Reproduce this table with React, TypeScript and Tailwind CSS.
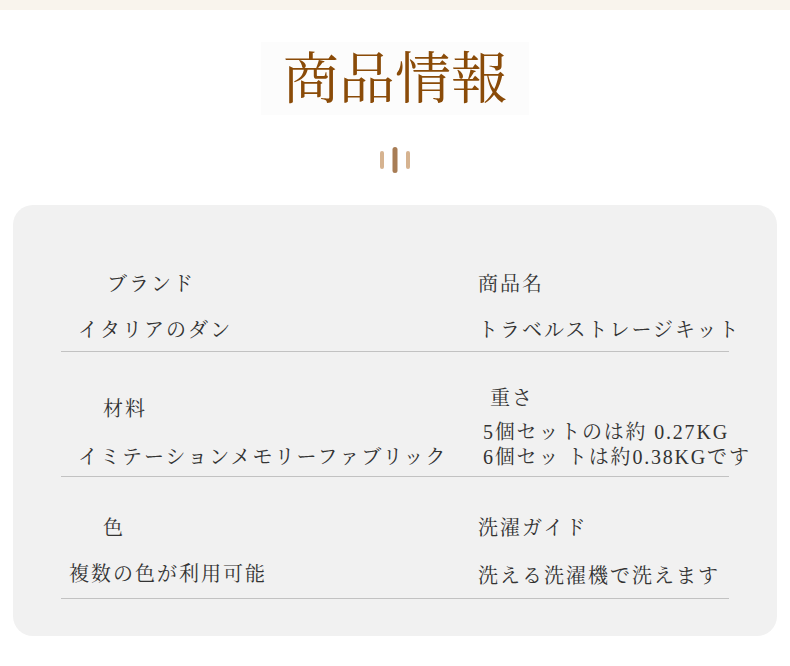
export default function App() {
  const font = "font-['Liberation_Serif','Noto_Serif_CJK_JP','Noto_Sans_CJK_JP',serif]";
  return (
    <div className={`w-full min-h-[666px] bg-white ${font}`}>
      <div className="h-[10px] bg-[#f9f4ed]"></div>

      {/* Title */}
      <div className="flex justify-center pt-[32px]">
        <div className="w-[268px] h-[73px] bg-[#fcfcfc] flex items-center justify-center">
          <h1 className="text-[56px] leading-none text-[#8a4b08]">商品情報</h1>
        </div>
      </div>

      <div className="flex justify-center mt-[32px]">
        <svg width="30" height="26" viewBox="0 0 30 26">
          <rect x="0" y="4" width="4" height="18" rx="2" fill="#d6b390" />
          <rect x="12.5" y="0" width="5" height="26" rx="2.5" fill="#a87d55" />
          <rect x="26" y="4" width="4" height="18" rx="2" fill="#d6b390" />
        </svg>
      </div>

      {/* Card */}
      <div className="mx-[13px] mt-[32px] rounded-[20px] bg-[#f1f1f1] px-[48px] pb-[37px] text-[20px] leading-[28px] tracking-[2px] text-[#333]">
        {/* Row 1 */}
        <div className="grid grid-cols-[417px_1fr] border-b border-[#c2c2c2] pb-[7px] whitespace-nowrap">
          <div className="pt-[65px]">
            <div className="pl-[46px]">ブランド</div>
            <div className="pl-[17px] mt-[18px]">イタリアのダン</div>
          </div>
          <div className="pt-[65px]">
            <div>商品名</div>
            <div className="mt-[18px]">トラベルストレージキット</div>
          </div>
        </div>

        {/* Row 2 */}
        <div className="grid grid-cols-[417px_1fr] border-b border-[#c2c2c2] pb-[5px] whitespace-nowrap">
          <div className="pt-[43px]">
            <div className="pl-[42px]">材料</div>
            <div className="pl-[17px] mt-[20px]">イミテーションメモリーファブリック</div>
          </div>
          <div className="pt-[32px]">
            <div className="pl-[12px]">重さ</div>
            <div className="pl-[5px] mt-[8px] leading-[25px] tracking-[1.8px]">
              <div>5個セットのは約 0.27KG</div>
              <div>6個セッ トは約0.38KGです</div>
            </div>
          </div>
        </div>

        {/* Row 3 */}
        <div className="grid grid-cols-[417px_1fr] border-b border-[#c2c2c2] pb-[8px] whitespace-nowrap">
          <div className="pt-[37px]">
            <div className="pl-[42px]">色</div>
            <div className="pl-[8px] mt-[18px]">複数の色が利用可能</div>
          </div>
          <div className="pt-[37px]">
            <div>洗濯ガイド</div>
            <div className="mt-[20px]">洗える洗濯機で洗えます</div>
          </div>
        </div>
      </div>
    </div>
  );
}
